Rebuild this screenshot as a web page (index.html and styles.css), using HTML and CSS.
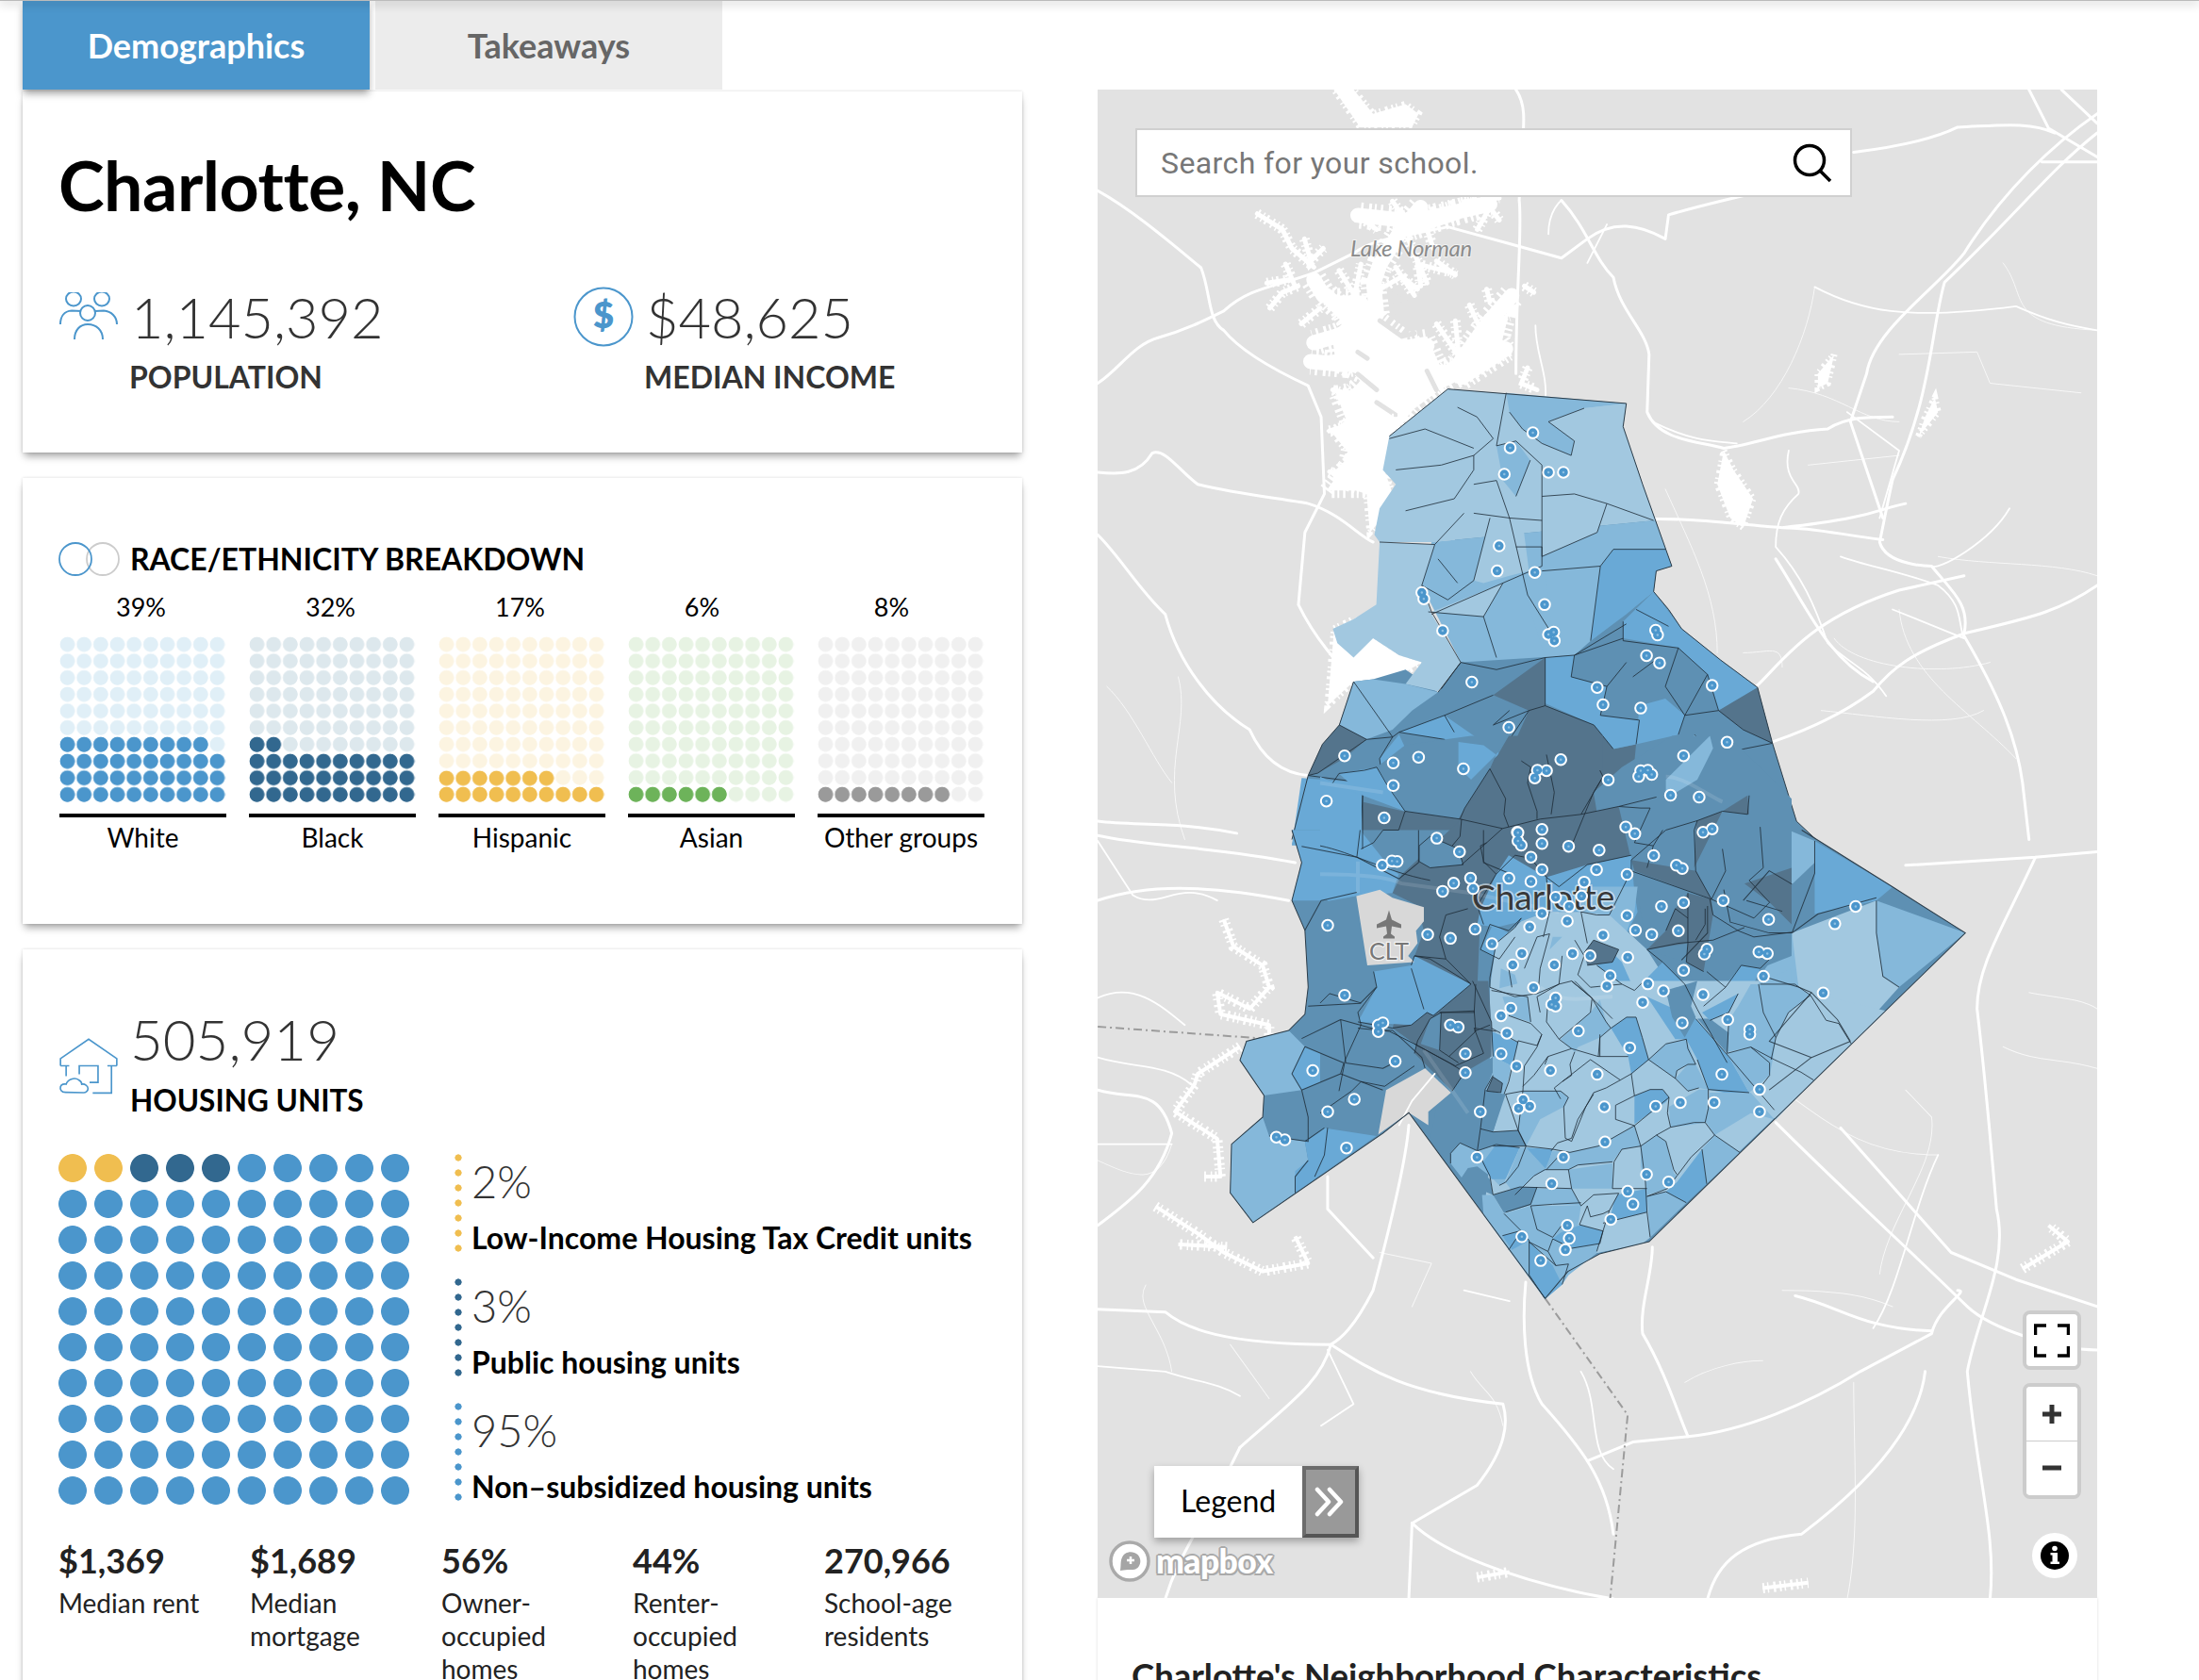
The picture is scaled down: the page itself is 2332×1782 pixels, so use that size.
FILE: index.html
```html
<!DOCTYPE html>
<html lang="en">
<head>
<meta charset="utf-8">
<title>Charlotte, NC</title>
<link rel="stylesheet" href="styles.css">
</head>
<body>
<div class="topbar"></div>
<div class="page">
  <main class="left">
    <nav class="tabs">
      <div class="tab tab-on">Demographics</div>
      <div class="tab tab-off">Takeaways</div>
    </nav>
    <section class="card card-city">
      <h1 class="city">Charlotte, NC</h1>
      <div class="stats">
        <div class="stat">
          <svg class="ico ico-people" viewBox="62 314 64 52"><g class="line">
            <ellipse cx="78" cy="321" rx="8" ry="7.5"/><ellipse cx="108" cy="321" rx="8" ry="7.5"/><ellipse cx="93" cy="336" rx="8" ry="8"/>
            <path d="M64 348C64 340 68 334 76 333.500L86 334"/><path d="M101 334L110 333.500C118 334 124 340 124 348"/><path d="M79 364C79 354 85 348 93 348C102 348 109 354 109 364"/>
          </g></svg>
          <div class="num">1,145,392</div>
          <div class="lab">POPULATION</div>
        </div>
        <div class="stat">
          <svg class="ico ico-dollar" viewBox="0 0 64 64"><circle class="line" cx="32" cy="32" r="30.500"/><text class="dollar" x="32" y="44">$</text></svg>
          <div class="num">$48,625</div>
          <div class="lab">MEDIAN INCOME</div>
        </div>
      </div>
    </section>
    <section class="card card-race">
      <div class="race-head">
        <svg class="ico-venn" viewBox="0 0 66 36"><circle class="venn-g" cx="47" cy="18" r="17"/><circle class="venn-b" cx="18" cy="18" r="17"/></svg>
        <h2 class="race-title">RACE/ETHNICITY BREAKDOWN</h2>
      </div>
      <div class="race-grid">
        <div class="race w-blue"><div class="pct">39%</div><div class="waffle"><div class="dots" style="width:159px"></div><div class="dots" style="height:53px"></div></div><div class="base"></div><div class="name">White</div></div>
        <div class="race w-navy"><div class="pct">32%</div><div class="waffle"><div class="dots" style="width:35.330px"></div><div class="dots" style="height:53px"></div></div><div class="base"></div><div class="name">Black</div></div>
        <div class="race w-gold"><div class="pct">17%</div><div class="waffle"><div class="dots" style="width:123.700px"></div><div class="dots" style="height:17.670px"></div></div><div class="base"></div><div class="name">Hispanic</div></div>
        <div class="race w-green"><div class="pct pct-short">6%</div><div class="waffle"><div class="dots" style="width:106px"></div></div><div class="base"></div><div class="name">Asian</div></div>
        <div class="race w-grey"><div class="pct pct-short">8%</div><div class="waffle"><div class="dots" style="width:141.300px"></div></div><div class="base"></div><div class="name">Other groups</div></div>
      </div>
    </section>
    <section class="card card-house">
      <div class="house-head">
        <svg class="ico-house" viewBox="60 110 210 190"><g class="line line-house">
          <path d="M72 205V182L162 120L252 182V205M72 205H100M222 205H252M90 205V238M235 205V292H175M132 232V205H192V258H165"/>
          <path d="M88 290C74 290 70 280 72 272C74 264 84 262 90 264C94 250 116 240 130 250C138 254 140 260 140 264C150 262 160 270 160 278C160 286 152 291 146 291Z"/>
        </g></svg>
        <div>
          <div class="num num-house">505,919</div>
          <div class="lab lab-house">HOUSING UNITS</div>
        </div>
      </div>
      <div class="house-main">
        <div class="bigwaffle"><div class="bigrow"><div class="bigdots big-gold"></div><div class="bigdots big-navy"></div></div></div>
        <div class="types">
          <div class="type"><div class="bar bar-gold"></div><div><div class="type-pct">2%</div><div class="type-name">Low-Income Housing Tax Credit units</div></div></div>
          <div class="type"><div class="bar bar-navy"></div><div><div class="type-pct">3%</div><div class="type-name">Public housing units</div></div></div>
          <div class="type"><div class="bar bar-blue"></div><div><div class="type-pct">95%</div><div class="type-name">Non–subsidized housing units</div></div></div>
        </div>
      </div>
      <div class="facts">
        <div class="fact"><div class="fact-num">$1,369</div><div class="fact-lab">Median rent</div></div>
        <div class="fact"><div class="fact-num">$1,689</div><div class="fact-lab">Median mortgage</div></div>
        <div class="fact"><div class="fact-num">56%</div><div class="fact-lab">Owner-occupied homes</div></div>
        <div class="fact"><div class="fact-num">44%</div><div class="fact-lab">Renter-occupied homes</div></div>
        <div class="fact"><div class="fact-num">270,966</div><div class="fact-lab">School-age residents</div></div>
      </div>
    </section>
  </main>
  <aside class="right">
    <div class="map">
      <svg class="mapsvg" viewBox="1164 95 1060 1599" preserveAspectRatio="none">
        <defs>
          <path id="lk2" d="M440 340L540 440M400 290L430 340M540 440L470 470L400 490M600 540L500 560L390 550M650 580L760 500M760 640L860 560L960 420L1030 340M870 600L1010 510M600 400L590 300L610 240L680 130L740 60M690 130L900 60M680 100L540 85M690 110L960 50"/>
          <path id="lk3" d="M300 130L330 190L400 250M220 80L300 130M370 160L390 230L430 190M310 240L340 310M260 380L300 330L350 310M250 300L320 290M360 430L420 380M480 260L530 340L550 240M610 320L680 280L730 320M740 310L730 240L850 270M950 320L960 360M790 430L860 530M850 420L860 520M895 370L940 470M500 640L540 700L540 760M460 640L540 660M450 770L520 750M590 690L640 700L680 640M500 860L580 850M450 900L520 930M1080 570L1060 620L1110 640M880 40L990 30M920 130L960 60L990 100M650 40L700 110M760 130L780 190M790 230L850 275M1070 310L1100 330M540 85L600 130M700 160L760 300M660 250L720 340"/>
          <path id="d4" d="M676 723h.1M641 754h.1M632 809h.1M700 805h.1M723 805h.1M624 958h.1M621 1010h.1M679 1013h.1M505 1055h.1M508 1068h.1M694 1080h.1M537 1134h.1M700 1142h.1M708 1137h.1M709 1155h.1M865 1133h.1M868 1143h.1M851 1186h.1M871 1201h.1M952 1248h.1M582 1241h.1M775 1252h.1M784 1288h.1M842 1295h.1M639 1335h.1M975 1366h.1M908 1394h.1M386 1394h.1M461 1409h.1M500 1397h.1M569 1421h.1M719 1402h.1M683 1424h.1M697 1425h.1M679 1440h.1M792 1444h.1M842 1425h.1M853 1424h.1M859 1433h.1M839 1437h.1M461 1456h.1M358 1488h.1M888 1476h.1M932 1480h.1M447 1523h.1M819 1542h.1M833 1556h.1M952 1546h.1M938 1553h.1M690 1547h.1M652 1553h.1"/>
          <path id="d5" d="M528 15h.1M563 40h.1M653 5h.1M653 20h.1M658 28h.1M690 25h.1M731 30h.1M778 37h.1M673 50h.1M862 47h.1M897 65h.1M906 71h.1M444 65h.1M459 57h.1M467 58h.1M690 73h.1M774 73h.1M821 82h.1M580 89h.1M639 89h.1M554 98h.1M584 108h.1M537 113h.1M673 95h.1M755 96h.1M711 124h.1M732 141h.1M751 122h.1M908 134h.1M969 130h.1M874 141h.1M690 154h.1M821 158h.1M1039 165h.1M1141 173h.1M1173 141h.1M360 176h.1M729 168h.1M671 179h.1M587 183h.1M834 185h.1M859 193h.1M900 186h.1M784 194h.1M514 193h.1M549 200h.1M613 210h.1M659 228h.1M737 228h.1M764 232h.1M822 235h.1M944 220h.1M940 229h.1M1024 225h.1M1037 228h.1M645 249h.1M709 249h.1M908 259h.1M1031 270h.1M795 269h.1M790 288h.1M853 284h.1M877 297h.1M677 291h.1M938 304h.1M386 305h.1M1123 301h.1M845 318h.1M711 310h.1M705 322h.1M711 325h.1M642 329h.1M627 343h.1M976 350h.1M906 356h.1M445 356h.1M438 360h.1M438 372h.1M549 360h.1M561 364h.1M636 375h.1M746 371h.1M1010 368h.1M1010 377h.1M825 402h.1M572 413h.1M627 413h.1M464 427h.1M337 444h.1M651 436h.1M703 444h.1M572 448h.1M775 451h.1M967 451h.1M401 497h.1M1025 479h.1M661 498h.1M654 514h.1M671 510h.1M786 511h.1M865 510h.1M903 503h.1M955 503h.1M360 520h.1M595 520h.1M1025 520h.1M281 567h.1M294 572h.1M787 576h.1M389 587h.1M590 604h.1M723 604h.1M851 636h.1M885 650h.1M705 653h.1M822 667h.1M830 691h.1M796 719h.1M729 730h.1M659 751h.1M732 754h.1M726 775h.1M688 795h.1"/>
          <path id="wy" d="M200 165L215 215L260 250L270 290L240 330L190 300L195 340L270 360L270 380M225 400L160 450L155 470L125 520L190 570L195 640L170 640M95 695L160 745L200 780L260 815L330 800L310 750M205 770L130 765M1430 810L1500 760L1470 730M1030 1400L1100 1390M590 1380L640 1370"/>
        </defs>
        <!-- Lake Norman -->
        <g class="lakes" transform="translate(1260 200) scale(.3333)">
          <use href="#lk2" class="lk lk-b"/><use href="#lk2" class="lk lk-bt"/>
          <use href="#lk3" class="lk lk-c"/><use href="#lk3" class="lk lk-ct"/>
          <path class="lake-mass" d="M440 340L560 340L620 420L700 480L760 470L800 560L860 560L960 420L1020 400L1000 480L1020 510L880 600L800 640L720 700L640 790L620 960L440 960L500 880L520 780L470 650L520 640L560 600L470 560L460 480L520 470L470 380Z"/>
          <path class="lake-in" d="M610 420L680 470L720 460M540 590L600 640M600 680L660 720M760 580L790 640M690 360L640 330L650 400M560 780L610 740M540 520L570 540"/>
        </g>
        <!-- base roads and water, traced in the north view -->
        <g transform="translate(1160 90) scale(.6887 .5102)">
          <g class="lake">
            <path d="M370 10L400 10L430 60L480 40L500 60L490 88L410 88Z"/>
            <path d="M410 690L370 640L395 690L365 720L395 770L365 810L385 835L420 850L425 930L445 900L460 850L445 790L450 725L490 690Z"/>
            <path d="M970 760L985 800L1015 860L1000 920L980 900L960 830Z"/>
            <path d="M1295 650L1300 680L1270 730L1280 690Z"/>
            <path d="M1140 560L1130 620L1115 630L1115 600Z"/>
            <path d="M370 1130L400 1110L430 1150L470 1185L505 1200L480 1220L430 1235L400 1240L360 1290Z"/>
          </g>
          <g class="r r3">
            <path d="M130 1230C150 1330 100 1420 140 1568M1110 420C1100 520 1060 650 1000 700M1240 1090C1250 1230 1350 1300 1420 1400M1120 1300C1200 1310 1320 1340 1370 1300M1140 1150C1170 1210 1300 1230 1380 1200M880 840C920 960 960 1060 960 1180M1000 1180C1040 1180 1060 1160 1060 1210M1400 370C1440 440 1400 500 1545 510M1070 630C1150 640 1180 700 1240 700M1100 790L1240 770M1240 560L1360 555L1380 620L1520 640M20 1250C60 1300 90 1400 120 1450M1300 980C1380 1000 1480 990 1545 1020M760 1145L880 1100"/>
          </g>
          <g class="r r2">
            <path d="M1410 880C1380 950 1300 1010 1290 1000M1160 680L1240 760L1210 900M1110 420C1180 470 1250 490 1420 460C1470 490 1500 500 1545 510M1070 760C1060 820 1090 830 1085 850C1060 880 1050 910 1050 960C1090 1020 1110 1080 1130 1160C1160 1200 1190 1210 1220 1270M1230 1090L1340 1150M860 700C920 740 950 740 990 745M760 370L790 290M1150 980C1190 1000 1240 1010 1300 1040C1340 1080 1330 1120 1340 1150M700 310C700 260 720 240 720 240M680 500C680 560 700 600 695 660"/>
          </g>
          <g class="r r1">
            <path d="M6 220C60 260 120 330 165 380C180 430 175 490 200 510C230 560 290 600 330 625L350 690L355 850L325 930L315 1080C340 1150 380 1210 400 1235"/>
            <path d="M6 620C40 590 60 540 100 525C140 510 170 490 200 470C240 420 280 420 340 390L400 350C430 320 460 320 545 295L640 330L720 360L760 320C800 280 840 290 880 320L885 270C950 245 1000 230 1050 215"/>
            <path d="M6 805C40 810 70 810 90 765C110 755 130 800 160 830C220 850 290 860 330 870C380 890 410 940 430 950"/>
            <path d="M650 10C670 50 660 90 655 240C660 300 650 420 650 600M720 240C760 300 770 360 800 400C810 470 850 510 855 560L852 680C870 740 930 740 970 755C1010 750 1060 720 1130 715C1160 690 1190 690 1230 690"/>
            <path d="M1545 60C1480 120 1400 220 1340 350C1300 420 1200 510 1190 600L1165 700L1215 900"/>
            <path d="M1545 100C1470 180 1420 270 1310 410C1290 500 1290 650 1230 820C1220 880 1215 920 1210 950C1220 1000 1290 1000 1290 1000C1320 1050 1350 1080 1340 1140"/>
            <path d="M862 902C930 900 1000 915 1060 920C1110 920 1150 935 1215 945M1060 920C1200 900 1210 880 1250 870"/>
            <path d="M1545 1040C1480 1100 1430 1110 1340 1140C1260 1180 1230 1210 1200 1260C1150 1310 1100 1340 1045 1365"/>
            <path d="M1050 985C1100 1090 1130 1190 1200 1240M1020 1250C1060 1200 1100 1110 1240 1050L1340 1020"/>
            <path d="M6 935C40 980 70 1050 110 1100C130 1200 180 1290 240 1340C260 1400 290 1430 330 1435M6 1530C60 1540 130 1530 220 1555M1340 1145C1390 1260 1420 1350 1430 1450L1440 1568"/>
            <path d="M1440 10L1470 90L1545 150M1490 10L1545 80M1170 140C1230 130 1290 115 1330 88C1390 85 1440 75 1480 100M1460 160L1545 160"/>
          </g>
        </g>
        <g transform="translate(1160 880) scale(.6887 .574)">
          <g class="wylie">
            <use href="#wy" class="wy-core"/><use href="#wy" class="wy-teeth"/>
          </g>
          <g class="r r3">
            <path d="M1400 400C1450 430 1490 420 1545 440M1250 480L1290 530C1300 620 1220 720 1210 820M1060 480C1150 560 1200 600 1300 600M1440 300C1480 310 1520 310 1545 330M1230 880C1190 860 1150 850 1060 850M910 1020C950 990 1000 980 1030 980M6 610C60 640 100 660 120 580M80 840C60 880 110 920 120 1000M580 1000C600 1040 620 1040 630 1100M210 950L270 1050M350 1100L400 1060M1170 1020C1170 1150 1180 1300 1160 1420M440 780L520 800L490 880"/>
          </g>
          <g class="r r2">
            <path d="M6 310C60 280 100 320 140 360M6 20L60 120C100 150 130 90 190 130M6 420C60 440 110 430 150 470M6 580L120 580M750 1000C780 1060 760 1150 800 1180M570 850L640 870M1200 920C1240 850 1260 700 1300 600M6 990L110 1000C160 1020 190 1020 225 1045M350 1100L400 1060L360 960"/>
          </g>
          <g class="r r1">
            <path d="M1250 65L1450 50L1545 40M1050 540C1150 660 1260 780 1345 880C1380 920 1480 960 1545 960M1150 550L1320 780L1420 830L1545 880"/>
            <path d="M1450 50C1400 180 1360 250 1360 330C1370 430 1380 560 1390 700C1410 800 1360 900 1345 1000C1360 1200 1390 1300 1380 1420"/>
            <path d="M860 770C860 820 840 880 845 930C880 1000 900 1080 915 1120C1000 1110 1100 1060 1180 1000L1290 930C1300 880 1350 850 1330 850"/>
            <path d="M665 835C660 900 660 1000 690 1060C750 1140 790 1200 800 1300"/>
            <path d="M485 545C480 620 450 760 430 850C400 920 380 940 365 950C350 1020 300 1060 225 1140M365 950C430 1000 480 1040 630 1060C640 1100 630 1150 590 1210L490 1280"/>
            <path d="M360 640L360 700L430 790M6 885L110 890C140 920 200 950 365 950M6 730C50 690 100 650 120 560C100 470 60 500 6 480"/>
            <path d="M1080 860C1150 880 1180 920 1290 925M830 1130L915 1120M760 1165L830 1130M490 1280C550 1350 700 1400 800 1420M945 1420C960 1350 1000 1310 1090 1300C1200 1200 1270 1100 1280 1000M6 10C80 30 180 30 310 60M6 130C80 100 170 100 300 130"/>
            <path d="M110 1420C130 1340 160 1300 225 1140M485 1420L490 1280"/>
          </g>
          <path class="border" d="M6 363L262 385M695 865L822 1080L795 1420"/>
        </g>
        <!-- north half of the county -->
        <g transform="translate(1160 90) scale(.6887 .5102)">
          <path class="c4" d="M545 632L820 662L815 710L845 830L890 1000L866 1010L862 1053L885 1090L905 1130L965 1195L1022 1252L1045 1368L1082 1530L1120 1580L305 1580L330 1435L352 1370L378 1330L400 1240L430 1235L480 1215L530 1262L565 1200Z"/>
          <path class="c1" d="M545 632L820 662L815 710L845 830L865 905L520 950L440 950L432 935L440 880L465 830L445 800L455 730Z"/>
          <path class="c2" d="M520 950L865 905L890 1000L866 1010L862 1053L765 1155L740 1185L565 1200L505 1040Z"/>
          <path class="c2" d="M635 640L820 662L755 672L700 700L740 740L735 770L690 745L660 715L640 680Z"/>
          <path class="c1" d="M755 672L820 662L815 710L845 830L862 905L790 870L740 850L690 855L690 790L735 770L740 740L700 700Z"/>
          <path class="c2" d="M620 750L650 740L672 780L650 855L630 822Z"/>
          <path class="c1" d="M690 855L790 870L775 930L690 980Z"/>
          <path class="c3" d="M800 965L880 965L890 1000L866 1010L862 1053L820 1100L765 1155L780 1000Z"/>
          <path class="c1" d="M610 900L660 905L670 1010L640 1020L600 1035L585 1030Z"/>
          <path class="c1" d="M520 1095L630 1035L600 1105Z"/>
          <path class="c2" d="M660 1040L695 1010L710 1190L695 1190Z"/>
          <path class="c1" d="M440 950L525 955L505 1040L520 1100L565 1200L530 1260L480 1245L505 1200L470 1185L430 1150L400 1190L375 1160L368 1130L400 1110L435 1080Z"/>
          <path class="c2" d="M400 1240L430 1235L480 1245L530 1262L490 1300L460 1340L420 1360L378 1330Z"/>
          <path class="c5" d="M615 1268L695 1190L695 1290L770 1330L800 1380L835 1370L830 1440L790 1480L860 1480L860 1580L410 1580L415 1490L480 1510L590 1430L620 1390L640 1390L670 1300Z"/>
          <path class="c3" d="M815 1115L862 1053L905 1130L965 1195L1022 1252L962 1300L945 1225L900 1170L815 1150Z"/>
          <path class="c3" d="M695 1190L740 1185L735 1230L790 1250L780 1310L840 1320L835 1370L800 1380L770 1330L695 1285Z"/>
          <path class="c3" d="M470 1345L540 1310L625 1390L590 1430L540 1360Z"/>
          <path class="c3" d="M840 1290L880 1275L910 1310L900 1350L835 1370Z"/>
          <path class="c2" d="M925 1350L955 1395L905 1480L885 1460L900 1400Z"/>
          <path class="c5" d="M962 1300L1022 1252L1045 1368L1000 1340Z"/>
          <path class="c5" d="M330 1435L352 1370L378 1330L420 1360L385 1400L345 1430Z"/>
          <path class="c3" d="M305 1580L320 1440L415 1450L410 1580Z"/>
          <path class="c3" d="M440 1400L470 1350L515 1480L480 1500L445 1450Z"/>
          <g class="mesh">
            <path d="M560 670L590 690L615 735L585 770M455 735L510 715L585 755M465 800L535 790L585 770M480 885L555 860L585 800L585 770M585 830L620 822M635 640L620 750L650 740L690 790M640 680L660 715M700 700L740 740L735 770L690 745L660 715M755 672L700 700M690 790L690 905M690 855L740 850L790 870L775 930L690 980L690 905M620 822L640 900L668 1060L705 1140M650 855L672 780M790 870L862 905M800 965L880 965M800 965L780 1000L765 1155M690 1010L780 1000M640 900L690 905M585 890L640 900M570 890L525 955M440 950L525 955L505 1040L545 1070L585 1030L610 900M530 985L560 1035M520 1100L630 1035L600 1105L515 1095M505 1040L520 1095L565 1200L535 1255M600 1105L620 1190M630 1035L690 1000L690 960L650 960M815 1115L815 1155L900 1170L945 1225L962 1300M835 1090L885 1125M695 1190L740 1185L820 1120M740 1185L735 1230L790 1250L780 1310L840 1320L835 1370M815 1150L740 1185M900 1170L880 1250L910 1310L900 1350M565 1200L620 1215L695 1190L695 1290M530 1262L565 1200M400 1240L460 1355L470 1345L540 1310L615 1268M470 1345L540 1360L590 1430L480 1510M625 1390L670 1300L695 1290L770 1330L800 1380M540 1310L555 1345M910 1310L962 1300L1000 1340L1045 1368L1000 1380L955 1395L925 1350M945 1225L910 1310M378 1330L420 1360L460 1355L440 1400L445 1450L515 1480M420 1360L345 1430L330 1435L415 1450L410 1580M640 1300L615 1330L670 1300M820 1200L790 1250M830 1230L870 1190"/>
          </g>
          <path class="mesh-out" d="M545 632L820 662L815 710L845 830L890 1000L866 1010L862 1053L885 1090L905 1130L965 1195L1022 1252L1045 1368L1082 1530L1112 1568M305 1568L330 1435L352 1370L378 1330L400 1240M455 730L545 632"/>
        </g>
        <!-- south half of the county: west and east blocks -->
        <g transform="translate(1160 880) scale(.6887 .574)">
          <path class="c4" d="M305 0L1090 0L1230 105L1342 190L855 760L780 782L730 815L695 865L485 522L445 560L245 725L210 670L212 580L260 530L262 490L225 425L235 390L300 370L325 340L330 290L325 185L305 130L320 60Z"/>
          <path class="c3" d="M305 130L320 60L305 0L410 0L470 90L405 115L350 130Z"/>
          <path class="c2" d="M225 425L235 390L300 370L325 400L305 450L320 480L262 490Z"/>
          <path class="c2" d="M245 725L210 670L212 580L260 530L270 565L325 575L330 610L310 640L310 670Z"/>
          <path class="c3" d="M310 670L310 630L330 610L325 575L355 550L435 565Z"/>
          <path class="c3" d="M305 450L325 400L385 430L380 450L320 480Z"/>
          <path class="c1" d="M1075 190L1205 130L1205 190L1215 270L1240 290L1165 390L1050 535L975 420L1040 385L1060 340L1085 290L1075 240Z"/>
          <path class="c2" d="M1025 270L1075 190L1085 290L1060 340L1040 385L1025 380Z"/>
          <path class="c2" d="M1205 130L1342 190L1240 290L1215 270L1205 190Z"/>
          <path class="c3" d="M1110 20L1230 105L1205 130L1110 155Z"/>
          <path class="c2" d="M1070 0L1110 20L1110 60L1075 100L1040 75Z"/>
        </g>
        <!-- inner city colours, close view -->
        <g transform="translate(1400 780) scale(.3333)">
          <path class="c5" d="M450 265L540 105L600 0L900 0L900 130L830 250L990 225L1000 400L720 450L510 560L500 800L540 1010L430 1050L300 980L230 930L290 730L330 620L310 540L230 500L260 440Z"/>
          <path class="c4" d="M270 30L480 0L600 0L560 60L540 105L460 230L440 265L270 240L210 160L180 100Z"/>
          <path class="c3" d="M440 20L520 30L560 60L480 140L440 100Z"/>
          <path class="c4" d="M870 180L960 100L1120 0L1300 0L1500 200L1500 700L1300 780L1220 860L1160 720L1040 680L1010 500L990 395L950 225L880 240Z"/>
          <path class="c2" d="M1100 140L1240 0L1250 40L1200 140L1100 200Z"/>
          <path class="c5" d="M1195 300L1200 270L1280 240L1360 190L1365 250L1280 240L1190 420Z"/>
          <path class="c5" d="M1350 470L1500 420L1500 600L1430 530Z"/>
          <path class="c5" d="M1170 500L1245 520L1250 570L1220 750L1165 720L1170 660L1040 680L1100 620L1130 550Z"/>
          <path class="c5" d="M990 395L1195 430L1245 520L1000 430Z"/>
          <path class="c3" d="M600 380L720 450L850 410L990 380L1000 500L1010 560L960 660L900 570L830 560L720 560L640 590L560 610L500 600L510 550L560 440Z"/>
          <path class="c2" d="M830 480L1010 480L1000 560L960 660L920 570L830 560Z"/>
          <path class="c3" d="M510 680L550 600L620 640L570 710Z"/>
          <path class="c1" d="M540 800L560 660L640 590L720 560L830 560L920 570L1040 680L1160 870L1160 960L1230 1110L1230 1200L540 1200Z"/>
          <path class="c2" d="M740 640L770 640L730 680Z"/>
          <path class="c2" d="M575 740L620 760L640 830L570 810Z"/>
          <path class="c3" d="M880 730L960 790L1000 810L960 720L940 700Z"/>
          <path class="c5" d="M840 690L870 650L950 680L930 720L850 730Z"/>
          <path class="c3" d="M1040 770L1090 720L1170 800L1200 870L1160 960L1100 870Z"/>
          <path class="c3" d="M1230 880L1290 800L1340 810L1280 860L1220 900Z"/>
          <path class="c3" d="M1300 780L1340 730L1400 740L1380 790L1290 800Z"/>
          <path class="c2" d="M1370 800L1500 740L1500 1060L1420 1100L1290 1000L1360 880Z"/>
          <path class="c2" d="M1200 870L1290 800L1360 880L1290 1000Z"/>
          <path class="c3" d="M0 130L130 190L135 360L250 440L230 500L115 510L30 530L0 500Z"/>
          <path class="c3" d="M60 120L180 100L270 240L135 190Z"/>
          <path class="c4" d="M0 530L115 510L150 730L170 750L180 800L0 850Z"/>
          <path class="c3" d="M170 750L290 730L300 700L480 790L360 890L340 880L290 920L120 910L180 800Z"/>
          <path class="c4" d="M0 850L120 880L130 920L230 930L300 980L430 1050L350 1140L200 1110L100 1130L0 1200Z"/>
          <path class="c4" d="M315 350L350 320L440 360L455 410L350 420L315 400Z"/>
          <path class="hole" d="M115 510L190 490L230 515L330 545L330 590L305 620L310 660L280 700L300 720L150 730Z"/>
        </g>
        <!-- south-central neighbourhoods, close view -->
        <g transform="translate(1500 1040) scale(.3333)">
          <path class="c1" d="M245 30L360 0L1100 0L1500 95L750 815L725 835L580 865L490 935L470 965L415 1012L220 745L250 480L285 360L245 240Z"/>
          <path class="c4" d="M50 505L70 400L120 350L170 300L250 240L250 290L225 345L290 360L250 480L330 475L355 525L250 525L200 540L145 515L115 550L110 580Z"/>
          <path class="c2" d="M145 515L200 540L260 520L290 640L270 650L240 620L200 590L170 595L150 625L115 580L115 548Z"/>
          <path class="c3" d="M260 520L335 530L290 630L245 630L215 580Z"/>
          <path class="c4" d="M150 630L180 595L205 600L240 630L250 680L225 670L215 700Z"/>
          <path class="c2" d="M335 530L355 530L420 600L380 620L320 680L290 640Z"/>
          <path class="c3" d="M355 530L440 535L420 600Z"/>
          <path class="c2" d="M440 540L495 545L585 525L700 460L720 525L660 535L630 575L520 585L490 600L415 600Z"/>
          <path class="c2" d="M490 600L630 580L630 660L500 660Z"/>
          <path class="c2" d="M380 660L500 660L530 715L440 710L370 715L375 665Z"/>
          <path class="c2" d="M215 680L250 680L285 740L370 715L530 715L520 780L600 795L580 865L490 935L470 965L415 1012L220 745Z"/>
          <path class="c4" d="M250 680L335 655L390 655L370 712L285 738Z"/>
          <path class="c3" d="M280 810L335 795L365 825L310 855Z"/>
          <path class="c3" d="M365 830L440 905L470 965L415 1012L365 935Z"/>
          <path class="c3" d="M530 775L600 795L590 835L500 850L440 820L465 800Z"/>
          <path class="c3" d="M640 680L740 660L740 735L620 765Z"/>
          <path class="c1" d="M550 715L650 675L620 730L600 740L560 750Z"/>
          <path class="c1" d="M525 775L550 715L560 750L600 740L600 795Z"/>
          <path class="c1" d="M610 790L740 735L750 815L725 835L580 865Z"/>
          <path class="c2" d="M740 685L800 670L865 705L750 815Z"/>
          <path class="c3" d="M800 670L835 640L915 535L930 645L865 705Z"/>
          <path class="c2" d="M915 535L955 490L1035 545L930 645Z"/>
          <path class="c2" d="M720 525L770 490L800 510L825 610L835 620L805 660L740 680L735 640L720 590Z"/>
          <path class="c2" d="M810 400L905 345L935 345L925 450L860 460L815 465Z"/>
          <path class="c2" d="M940 355L1070 355L1145 440L1070 420L955 490L925 445Z"/>
          <path class="c3" d="M700 365L750 345L790 345L810 370L800 385L700 455Z"/>
          <path class="c3" d="M625 150L675 115L705 115L725 180L745 250L690 295L680 240Z"/>
          <path class="c2" d="M590 60L610 130L625 150L590 180L520 210L510 225L465 185L560 100Z"/>
          <path class="c2" d="M745 250L800 200L865 185L895 265L870 265L835 285L830 310Z"/>
          <path class="c2" d="M870 265L895 265L935 345L905 340L870 350L830 310Z"/>
          <path class="c3" d="M895 120L1000 240L1065 355L985 355L935 345L900 250L865 185L830 185L780 110L740 50Z"/>
          <path class="c2" d="M995 230L1070 210L1140 250L1130 300L1065 355Z"/>
          <path class="c2" d="M995 170L1000 125L1030 80L1070 10L1095 10L1110 100L1150 180L1140 250L1070 210L995 225Z"/>
          <path class="c4" d="M900 120L940 120L1000 165L995 230L960 190Z"/>
          <path class="c3" d="M915 100L1030 40L1000 100L940 125Z"/>
          <path class="c4" d="M800 30L900 0L880 80L895 115L860 180L820 115Z"/>
          <path class="c2" d="M1100 0L1210 10L1260 45L1190 100L1150 180L1110 100L1095 10Z"/>
          <path class="c2" d="M280 50L360 50L370 130L300 110Z"/>
          <path class="c3" d="M245 160L330 195L310 270L250 240Z"/>
          <path class="c2" d="M250 240L310 270L285 360L225 345L250 290Z"/>
          <path class="c2" d="M345 350L465 350L490 370L475 400L400 440L355 525L330 475Z"/>
          <path class="c5" d="M185 0L235 0L245 140L245 240L160 290L120 350L0 230L10 190L50 120L85 100L180 25Z"/>
          <path class="c4" d="M50 120L85 100L80 220L20 200Z"/>
          <path class="c5" d="M230 350L250 305L280 325L275 355Z"/>
          <g class="mesh">
            <path d="M245 30L360 50L370 130M245 150L330 195M300 110L370 135L405 170L390 205L330 190L300 320L285 360M405 170L390 210L350 270L345 350M425 60L420 130L460 185L560 100L565 55L510 0M565 55L610 130L625 150M425 240L410 260L380 300L345 335M460 185L500 215L425 240L415 265M500 215L585 240L590 180L625 150M585 240L680 240M510 225L495 265L500 300L470 320L445 340L465 375M345 350L465 350L490 370L475 400L480 500L500 510L545 400L570 355L610 340L655 315L690 295L700 365L640 395L640 440L700 460M570 360L545 400L520 440L500 500L455 515L435 540M470 320L560 250L655 315M690 295L745 250L830 310L870 350L905 340M745 250L800 200L865 185M700 365L750 345L790 345L810 370L700 460M625 150L675 115L705 115L725 180L745 250M810 370L805 420L815 465L890 450L925 450L935 405L935 345L1065 355M830 310L835 285L870 265L895 265L870 215L865 185M895 120L1000 240L1145 410M900 250L935 345M815 465L770 490L720 525L700 460M720 525L735 640L740 735L750 815M720 525L660 535L635 575L630 660M770 490L800 510L825 600L835 615M925 450L955 490L1035 545M955 490L880 560L835 620L805 660L740 685M915 535L930 645M800 670L865 705M700 460L585 525L495 545L440 535L355 525L330 475L290 360L345 350L330 475L355 525L330 590L290 640L270 650M200 540L145 515L115 548L115 580M200 540L260 520L335 530M250 480L330 475M250 525L355 525M250 480L210 470L200 540L240 620L250 680M420 600L470 545M415 600L380 620L320 680M415 600L490 600L520 585L630 575M490 600L500 660L530 715L570 680L650 675L620 730L600 740L560 750L550 715L525 775L600 795L590 835L500 850L440 820L425 860L450 905L490 900L470 965M250 680L335 655L500 660M390 655L370 710L290 735M370 715L390 790L440 815L470 775M370 715L440 710L530 705M285 740L340 795L300 855M280 810L335 795L365 825L365 935L415 1010M450 905L365 830M425 860L365 830M630 660L740 660M620 730L600 795L580 860M600 770L740 735M800 670L740 685M1000 125L995 230L1070 210L1145 250L1230 290L1270 315M1070 210L1130 260L1130 300L1095 345M1095 10L1110 100L1150 180L1135 250M1150 180L1190 100L1260 45L1310 125L1350 135L1390 200M1260 45L1210 10L1100 10M1030 40L1000 100L940 125M85 100L190 95L195 160L110 240M85 100L80 220L140 260M50 120L85 100M0 200L110 260L160 290L120 350M240 140L190 160M185 0L245 130L250 240M230 350L250 305L280 325L275 355ZM250 300L225 345L210 470M0 230L10 190L50 120M500 0L565 55M590 170L590 240"/>
          </g>
        </g>
        <!-- west and east boundaries, and the county outline -->
        <g transform="translate(1160 880) scale(.6887 .574)">
          <path class="hole" d="M450 480L510 440L550 485L515 520L515 545L485 522L438 562Z"/>
          <path class="r r2" d="M470 545L490 500L525 450"/>
          <g class="mesh">
            <path d="M1040 480L1105 420L1165 390M1105 420L1040 390L1105 300L1085 290L1030 270M1105 300L1145 350L1165 390M1075 190L1115 155L1205 125M1075 190L1110 80L1110 20M1075 190L1040 190L980 170L970 110M1000 130L1040 75L1075 100M1060 150L1005 130M945 140L945 190L905 240M325 185L350 130L405 115M330 325L410 320L435 290M320 385L380 350L440 370L460 370L505 420L510 440M380 350L388 430L445 440L470 425M325 400L385 430L380 450L320 480L305 450L325 400M320 480L330 530L330 575L270 565M355 550L325 575M380 450L445 480M330 610L310 640L310 670M360 550L355 600L340 640M410 0L405 50L470 90L500 60L500 0M405 50L320 30M600 0L600 60L640 80M1205 130L1205 190L1215 270L1240 290"/>
          </g>
          <path class="mesh-out" d="M1090 0L1230 105L1342 190L855 760L780 782L730 815L695 865L485 522L445 560L245 725L210 670L212 580L260 530L262 490L225 425L235 390L300 370L325 340L330 290L325 185L305 130L320 60L305 0"/>
        </g>
        <!-- inner city boundaries, traced in the close view -->
        <g transform="translate(1400 780) scale(.3333)">
          <path class="road-faint" d="M0 440C60 440 200 440 260 470L480 500L760 560M120 400L120 500M330 1000L470 1200M700 800C780 860 850 830 930 830M1100 130C1160 130 1250 200 1280 210M0 150L200 180"/>
          <g class="mesh">
            <path d="M0 350C100 370 200 430 350 460M270 240L445 265L580 295L700 265L830 250L950 225L1070 195M445 265L460 230L540 105L590 200L585 250L600 290M690 265L690 240L660 150L670 100L640 80M735 250L745 180L720 60M830 250L900 130L890 110M270 240L215 160L180 100L140 110L60 120L40 150M135 190L135 360M270 240L250 300L200 300L170 340L130 360M315 350L350 320L440 360L455 410L350 420L315 400ZM420 350L445 320L450 265M510 350L530 340L580 295M530 340L450 410M510 350L520 400L560 440M990 395L1100 300L1200 270L1190 300L1195 430L1245 520L1380 580L1430 530M990 395L990 430L1245 520M800 350L870 180L900 130M1000 340L1050 230L1020 230L950 225M1200 270L1280 240L1360 250L1365 190M1280 360L1290 430L1245 520M1400 290L1410 420L1365 460L1430 530M1240 520L1250 570L1330 620L1380 640L1500 625M1040 680L1140 660L1250 650L1350 610M1170 500L1170 660L1165 720L1220 750M1225 550L1225 600L1195 650M1100 620L1130 550L1170 580M1040 680L1090 720L1160 790L1200 870L1295 1040M1220 860L1290 800L1340 730L1400 740L1440 700M1230 750L1290 800M480 790L400 710L380 640L400 570L470 550M290 730L300 700L350 710L480 790L360 890L340 880L290 920L230 930L120 910M170 750L180 800L120 880L130 920L80 1030L60 1130M290 740L330 870M0 850L30 820L130 850M400 710L300 700M120 930L220 940L300 980L430 1050L520 1010L490 930L560 940M380 880L490 880L495 790M540 800L620 830L690 820L760 790L800 780L860 830L930 900M540 800L540 770L560 660L620 610L640 580M600 740L610 800M650 740L690 640L730 630L700 740L695 800M770 700L760 790L690 830L700 880M810 650L840 700L820 760L860 800L960 790L1000 810L1040 770M880 730L960 790M850 730L930 720L950 680L870 650L840 690M640 580L600 620L540 600L510 680L570 710L620 640M720 450L670 390L620 380L560 440L500 540L520 600M720 450L760 480L850 410L990 380M830 560L880 570L920 570L990 430M720 450L730 560L710 640M830 560L850 660M1000 340L1060 350L1040 420M1090 300L1060 350M300 1050L205 1115L130 1100L100 1130L0 1200"/>
          </g>
        </g>
        <!-- labels -->
        <text class="map-lake" x="1432" y="272">Lake Norman</text>
        <text class="map-clt" x="1452" y="1017">CLT</text>
        <path class="plane" d="M1473 965L1476 975L1486 980V984L1476 982L1475 990L1479 993V995H1467V993L1471 990L1470 982L1460 984V980L1470 975Z"/>
        <text class="map-city" x="1561" y="964">Charlotte</text>
        <!-- schools -->
        <g transform="translate(1160 90) scale(.6887 .5102)">
          <use href="#d4" class="dot-w"/><use href="#d4" class="dot-b"/><use href="#d4" class="dot-c"/>
        </g>
        <g transform="translate(1160 880) scale(.6887 .574)">
          <use href="#d5" class="dot-w"/><use href="#d5" class="dot-b"/><use href="#d5" class="dot-c"/>
        </g>
      </svg>
      <div class="search"><span class="search-text">Search for your school.</span>
        <svg class="search-ico" viewBox="0 0 42 42"><circle cx="18" cy="18" r="15.500"/><path d="M29 29L40 40"/></svg>
      </div>
      <div class="legend"><span class="legend-text">Legend</span><span class="legend-btn"><svg viewBox="0 0 34 34"><path d="M3 4L15 17L3 30M16 4L28 17L16 30"/></svg></span></div>
      <div class="brand">
        <svg class="brand-mark" viewBox="0 0 44 44"><circle class="bm-o" cx="22" cy="22" r="20"/><path class="bm-p" d="M12 32C13 26 12 22 14 18C16 13 22 11 27 13C33 15 35 22 32 27C29 32 24 31 20 31C17 31 14 32 12 32Z"/><path class="bm-w" d="M23 17V25M19 21H27"/></svg>
        <span class="brand-text">mapbox</span>
      </div>
      <div class="ctrl ctrl-full">
        <button class="ctrl-btn"><svg viewBox="0 0 38 36"><path d="M1.500 12V2H13M25 2H36.500V12M1.500 24V34H13M25 34H36.500V24"/></svg></button>
      </div>
      <div class="ctrl ctrl-zoom">
        <button class="ctrl-btn"><svg viewBox="0 0 24 24"><path d="M12 2V22M2 12H22"/></svg></button>
        <button class="ctrl-btn ctrl-btn2"><svg viewBox="0 0 24 24"><path d="M2 12H22"/></svg></button>
      </div>
      <div class="info"><svg viewBox="0 0 30 30"><circle cx="15" cy="15" r="15"/><rect class="i-w" x="12.500" y="12" width="5.500" height="12"/><rect class="i-w" x="10.500" y="12" width="5" height="2.500"/><rect class="i-w" x="10.500" y="21.500" width="9.500" height="2.500"/><circle class="i-w" cx="15" cy="7.500" r="2.800"/></svg></div>
    </div>
    <section class="card card-hood">
      <h2 class="hood-title">Charlotte's Neighborhood Characteristics</h2>
    </section>
  </aside>
</div>
</body>
</html>
```
FILE: styles.css
```css
* { box-sizing: border-box; }
html, body { margin: 0; padding: 0; height: 1782px; overflow: hidden; background: #fff; }
body { font-family: "Lato", "Liberation Sans", sans-serif; color: #000; }
h1, h2 { margin: 0; }

.topbar { position: relative; z-index: 5; height: 1px; background: #bbb; box-shadow: 0 1px 11px 1px rgba(0, 0, 0, .32); }
.page { display: flex; gap: 80px; padding-left: 24px; height: 1781px; }
.left { width: 1060px; flex: none; }
.right { width: 1060px; flex: none; padding-top: 94px; }

.tabs { display: flex; gap: 6px; height: 94px; position: relative; z-index: 2; }
.tab { width: 368px; height: 94px; display: flex; align-items: center; justify-content: center; font-size: 36px; font-weight: 700; }
.tab-on { background: #4b96cc; color: #fff; box-shadow: 0 5px 8px -1px rgba(0, 0, 0, .38); }
.tab-off { background: #ececec; color: #666; }

.card { background: #fff; box-shadow: 0 0 3px rgba(0, 0, 0, .14), 0 6px 8px -2px rgba(0, 0, 0, .35); }
.card-city { height: 383px; margin-top: 2px; padding: 54px 38px 0; }
.city { font-size: 73.500px; line-height: 90px; font-weight: 700; letter-spacing: -.5px; }
.stats { display: flex; margin-top: 60px; }
.stat { width: 546px; flex: none; display: grid; grid-template-columns: 77px auto; align-items: center; }
.ico { width: 64px; justify-self: start; }
.ico-people { height: 52px; }
.ico-dollar { height: 64px; }
.line { fill: none; stroke: #4b96cc; stroke-width: 2; }
.dollar { fill: #4b96cc; font-size: 38px; font-weight: 800; text-anchor: middle; }
.num { font-size: 59.500px; line-height: 70px; font-weight: 300; color: #333; }
.lab { grid-column: 2; font-size: 32px; line-height: 38px; font-weight: 700; color: #333; margin: 10px 0 0 -2px; }

.card-race { height: 473px; margin-top: 27px; padding: 66px 38px 0; }
.race-head { display: flex; align-items: center; gap: 10px; }
.ico-venn { width: 66px; height: 36px; }
.venn-g { fill: #fff; stroke: #ccc; stroke-width: 1.800; }
.venn-b { fill: none; stroke: #4b96cc; stroke-width: 1.800; }
.race-title { font-size: 32px; line-height: 40px; font-weight: 700; }
.race-grid { display: grid; grid-template-columns: repeat(5, 177px); gap: 24px; margin: 11px 0 0 1px; }
.pct { text-align: center; font-size: 27px; line-height: 40px; padding-right: 4px; }
.pct-short { padding-right: 20px; }
.waffle { width: 177px; height: 177px; margin-top: 11px; display: flex; flex-direction: column; justify-content: flex-end; background: radial-gradient(circle at 8.5px 8.5px, var(--off) 7.500px, transparent 8.200px) 0 0 / 17.670px 17.670px; }
.dots { height: 17.670px; width: 176.700px; background: radial-gradient(circle at 8.5px 8.5px, var(--on) 7.500px, transparent 8.200px) 0 0 / 17.670px 17.670px; }
.base { height: 4px; background: #000; margin-top: 11px; }
.name { text-align: center; font-size: 28px; line-height: 40px; margin-top: 1px; }
.w-blue { --on: #4b96cc; --off: #e0eff7; }
.w-navy { --on: #32688f; --off: #dde8ed; }
.w-gold { --on: #f0be50; --off: #fcf4e1; }
.w-green { --on: #6db35a; --off: #e7f3e3; }
.w-grey { --on: #9a9a9a; --off: #f0f0f0; }

.card-house { height: 800px; margin-top: 27px; padding: 58px 38px 0; }
.house-head { display: flex; gap: 8px; align-items: flex-start; }
.ico-house { width: 70px; height: 63px; margin: 34px 0 0 -2px; flex: none; }
.line-house { stroke-width: 5; }
.num-house { font-size: 60px; line-height: 74px; }
.lab-house { font-size: 31.500px; line-height: 40px; color: #000; margin: 8px 0 0; }
.house-main { display: flex; margin-top: 37px; }
.bigwaffle { width: 380px; height: 380px; flex: none; background: radial-gradient(circle at 15px 15px, #4b96cc 14.500px, transparent 15.300px) 0 0 / 38px 38px; }
.bigrow { display: flex; }
.bigdots { height: 38px; background: radial-gradient(circle at 15px 15px, var(--c) 14.500px, #fff 15.300px) 0 0 / 38px 38px; }
.big-gold { --c: #f0be50; width: 76px; }
.big-navy { --c: #32688f; width: 114px; }
.types { margin-left: 40px; display: flex; flex-direction: column; gap: 20px; }
.type { display: flex; gap: 10px; }
.bar { width: 8px; height: 112px; flex: none; background: radial-gradient(circle at 4px 4px, var(--c) 3.300px, transparent 3.900px) 0 0 / 8px 16px; }
.bar-gold { --c: #f0be50; }
.bar-navy { --c: #32688f; }
.bar-blue { --c: #4b96cc; }
.type-pct { font-size: 47px; line-height: 52px; font-weight: 300; color: #333; margin-top: 3px; }
.type-name { font-size: 32px; line-height: 40px; font-weight: 700; margin-top: 14px; white-space: nowrap; }
.facts { display: grid; grid-template-columns: repeat(5, 203px); margin-top: 29px; }
.fact-num { font-size: 36px; line-height: 44px; font-weight: 700; color: #222; }
.fact-lab { font-size: 28px; line-height: 35px; color: #222; margin-top: 6px; padding-right: 30px; }

.map { position: relative; height: 1600px; background: #e2e2e2; overflow: hidden; }
.mapsvg { position: absolute; inset: 0; width: 100%; height: 100%; display: block; }
.mapsvg * { vector-effect: non-scaling-stroke; }
.r { fill: none; stroke: #fff; stroke-linejoin: round; stroke-linecap: round; }
.r1 { stroke-width: 3; }
.r2 { stroke-width: 1.800; }
.r3 { stroke-width: 1; opacity: .75; }
.lake path { fill: #fff; stroke: #fff; stroke-width: 7; stroke-dasharray: 2 3 1.500 5 3 4; }
.lk { fill: none; stroke: #fff; }
.lk-b { stroke-width: 16; stroke-linecap: round; }
.lk-bt { stroke-width: 28; stroke-dasharray: 2.500 4.500 2 3 3 6; }
.lk-c { stroke-width: 5; stroke-linecap: round; }
.lk-ct { stroke-width: 11; stroke-dasharray: 2 4 1.500 3 2.500 5; }
.lake-mass { fill: #fff; stroke: #fff; stroke-width: 16; stroke-dasharray: 2.500 4 2 3 3 6; }
.lake-in { fill: none; stroke: #e2e2e2; stroke-width: 5; stroke-linecap: round; }
.wy-core { fill: none; stroke: #fff; stroke-width: 4; stroke-linejoin: round; }
.wy-teeth { fill: none; stroke: #fff; stroke-width: 11; stroke-dasharray: 2 3 1.500 5 2.500 4; }
.border { fill: none; stroke: #9c9c9c; stroke-width: 2; stroke-dasharray: 9 4 2 4; }
.c1 { fill: #a2c8e0; }
.c2 { fill: #85b8da; }
.c3 { fill: #69a9d6; }
.c4 { fill: #5e90b3; }
.c5 { fill: #54748c; }
.hole { fill: #d8d8d8; }
.mesh path { fill: none; stroke: #1d2b36; stroke-width: 1; stroke-opacity: .8; stroke-linejoin: round; }
.mesh-out { fill: none; stroke: #2c3c48; stroke-width: 1; }
.road-faint { fill: none; stroke: #fff; stroke-opacity: .12; stroke-width: 4; }
.map-lake { font-size: 24px; font-style: italic; fill: #8b8b8b; letter-spacing: -.3px; paint-order: stroke; stroke: rgba(255, 255, 255, .5); stroke-width: 2; }
.map-clt { font-size: 25px; fill: #777; paint-order: stroke; stroke: rgba(255, 255, 255, .7); stroke-width: 2.500; }
.map-city { font-size: 37px; fill: #383838; paint-order: stroke; stroke: rgba(255, 255, 255, .55); stroke-width: 3.500; }
.plane { fill: #777; }
.dot-w { fill: none; stroke: #fff; stroke-width: 13.500; stroke-linecap: round; }
.dot-b { fill: none; stroke: #4b96cc; stroke-width: 9.500; stroke-linecap: round; }
.dot-c { fill: none; stroke: #8dbfe2; stroke-width: 2.500; stroke-linecap: round; }

.search { position: absolute; left: 40px; top: 41px; width: 760px; height: 73px; background: #fff; border: 2px solid #d0d0d0; display: flex; align-items: center; justify-content: space-between; padding: 0 19px 0 25px; }
.search-text { font-family: "Roboto", sans-serif; font-size: 32px; color: #777; letter-spacing: .4px; }
.search-ico { width: 42px; height: 42px; }
.search-ico circle, .search-ico path { fill: none; stroke: #000; stroke-width: 3.500; }
.legend { position: absolute; left: 60px; top: 1460px; height: 76px; width: 217px; display: flex; box-shadow: 0 4px 8px rgba(0, 0, 0, .3); background: #fff; }
.legend-text { width: 157px; font-size: 32px; line-height: 74px; padding-left: 28px; }
.legend-btn { width: 60px; background: #999; border: 4px solid; border-color: #6c6c6c #555 #555 #6c6c6c; display: flex; align-items: center; justify-content: center; }
.legend-btn svg { width: 34px; height: 34px; }
.legend-btn path { fill: none; stroke: #fff; stroke-width: 4.500; stroke-linecap: round; stroke-linejoin: round; }
.brand { position: absolute; left: 12px; top: 1539px; display: flex; align-items: center; gap: 6px; }
.brand-mark { width: 44px; height: 44px; }
.bm-o { fill: #fff; stroke: #aaa; stroke-width: 3.500; }
.bm-p { fill: #a5a5a5; }
.bm-w { fill: none; stroke: #fff; stroke-width: 2.500; }
.brand-text { font-size: 35.500px; font-weight: 900; line-height: 40px; color: #fff; letter-spacing: -.6px; text-shadow: -2px 0 #aaa, 2px 0 #aaa, 0 -2px #aaa, 0 2px #aaa, -1.500px -1.500px #aaa, 1.500px -1.500px #aaa, -1.500px 1.500px #aaa, 1.500px 1.500px #aaa; }
.ctrl { position: absolute; left: 981px; width: 62px; background: #fff; border: 4px solid #ccc; border-radius: 8px; overflow: hidden; }
.ctrl-full { top: 1295px; height: 63px; }
.ctrl-zoom { top: 1372px; height: 123px; }
.ctrl-btn { display: flex; width: 100%; height: 57px; align-items: center; justify-content: center; padding: 0; border: 0; background: #fff; }
.ctrl-btn2 { border-top: 1px solid #ccc; }
.ctrl-full .ctrl-btn { height: 55px; }
.ctrl-full svg { width: 38px; height: 36px; }
.ctrl-full path { fill: none; stroke: #000; stroke-width: 3.500; }
.ctrl-zoom svg { width: 24px; height: 24px; }
.ctrl-zoom path { fill: none; stroke: #333; stroke-width: 5; }
.info { position: absolute; left: 991px; top: 1531px; width: 48px; height: 48px; border-radius: 50%; background: #fff; display: flex; align-items: center; justify-content: center; }
.info svg { width: 30px; height: 30px; }
.i-w { fill: #fff; }

.card-hood { height: 200px; margin: 0; padding: 62px 36px 0; box-shadow: 0 0 3px rgba(0, 0, 0, .14); }
.hood-title { font-size: 36.500px; line-height: 40px; font-weight: 700; color: #222; white-space: nowrap; }
```
